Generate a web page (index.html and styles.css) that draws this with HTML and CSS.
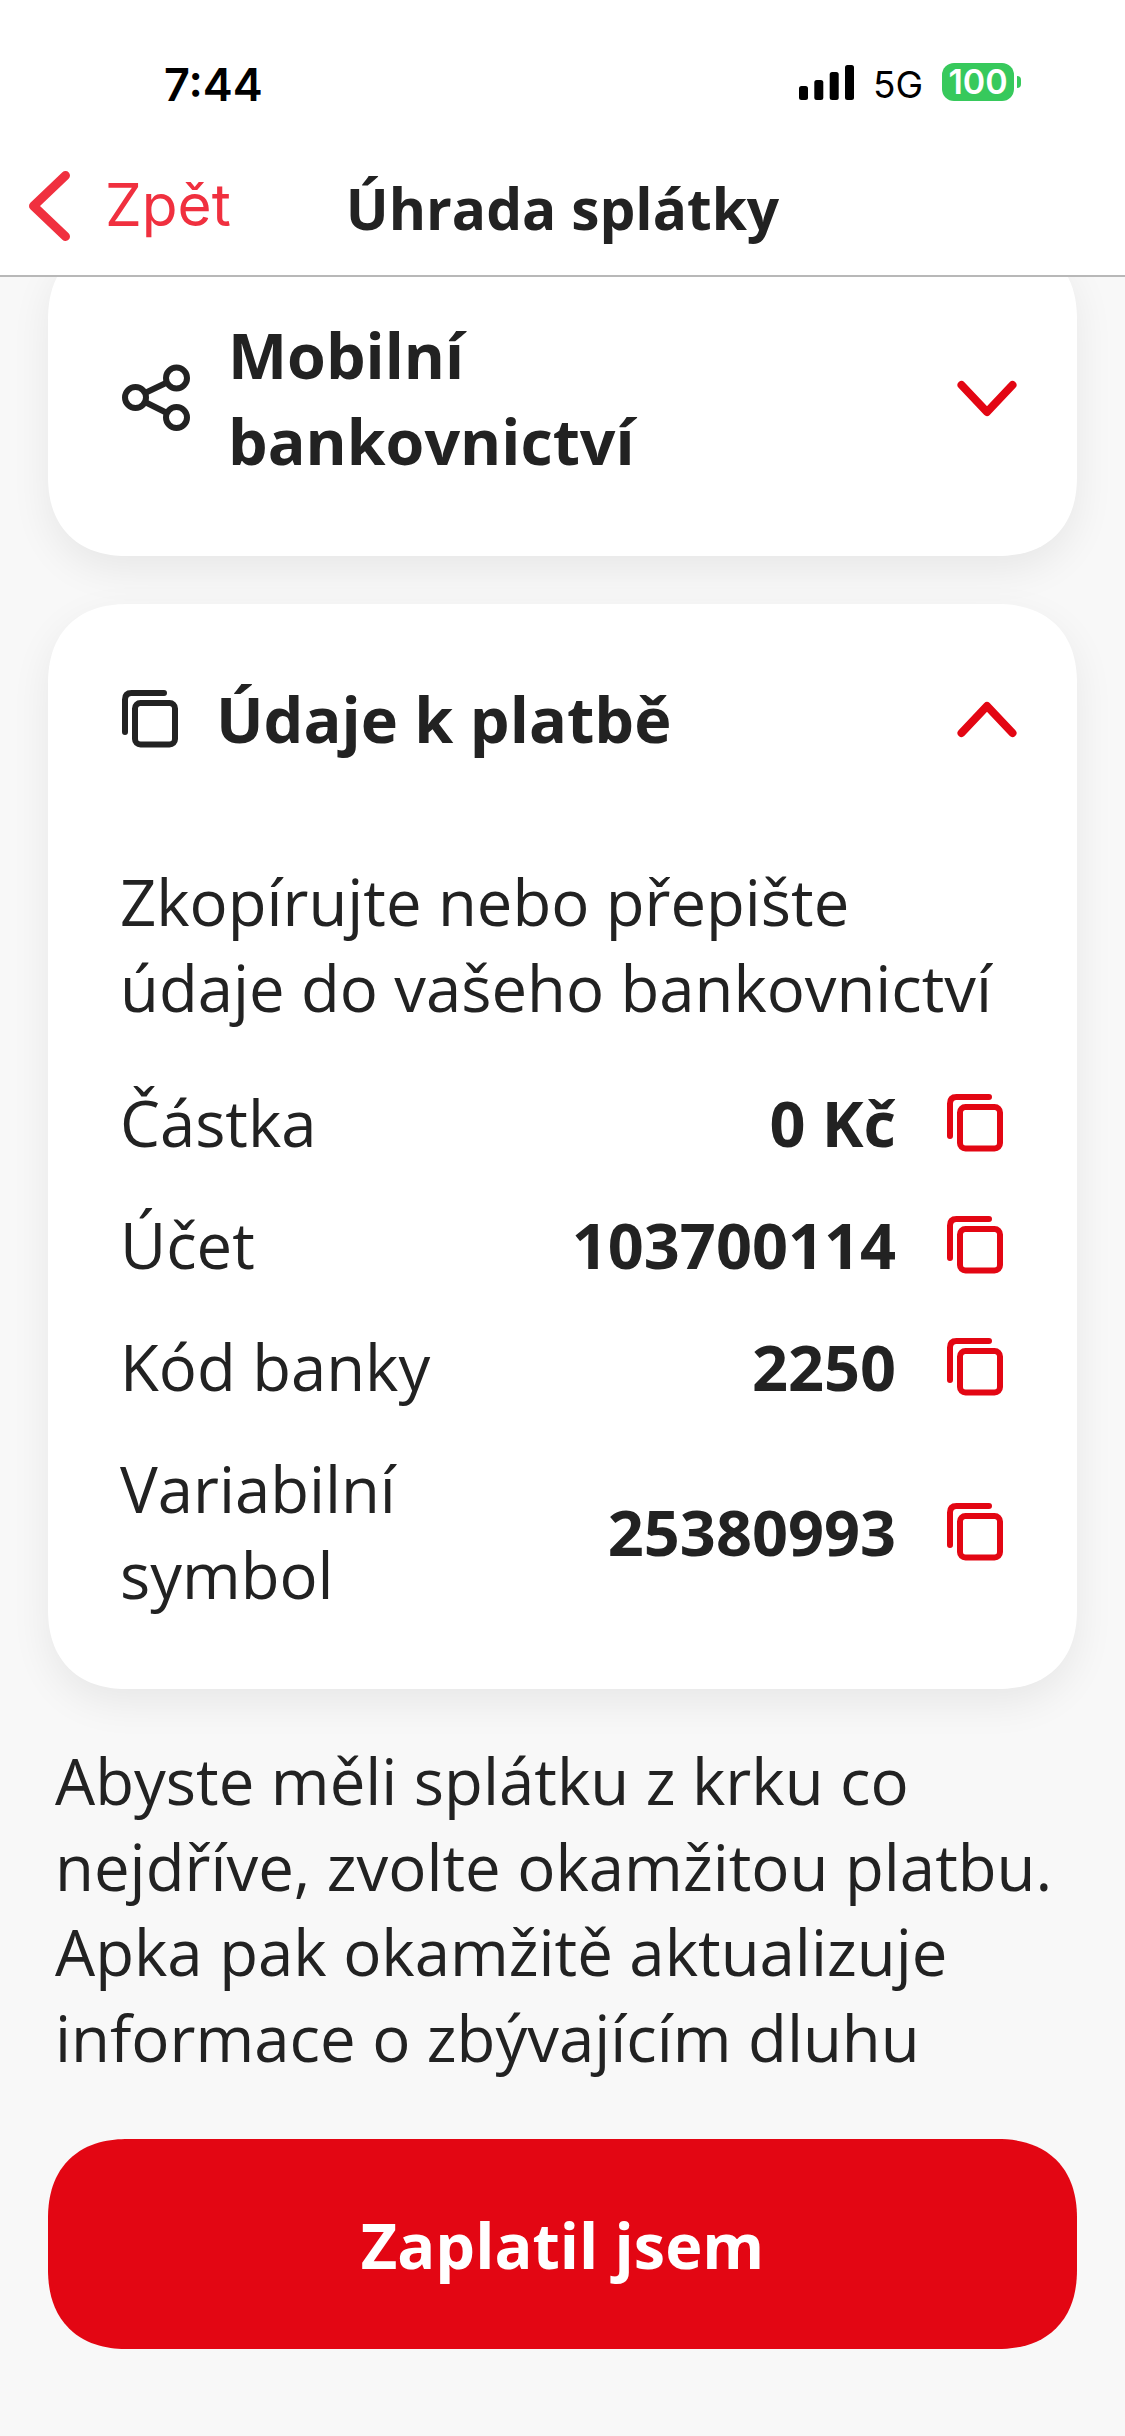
FILE: index.html
```html
<!DOCTYPE html>
<html lang="cs">
<head>
<meta charset="utf-8">
<title>Úhrada splátky</title>
<link rel="stylesheet" href="styles.css">
</head>
<body>
<div class="app">
  <div class="status">
    <span class="time">7:44</span>
    <div class="status-right">
      <svg class="signal" width="55" height="35" viewBox="0 0 55 35"><rect x="0" y="21" width="9" height="14" rx="2.5"/><rect x="15.3" y="15" width="9" height="20" rx="2.5"/><rect x="30.7" y="7" width="9" height="28" rx="2.5"/><rect x="46" y="0" width="9" height="35" rx="2.5"/></svg>
      <span class="net">5G</span>
      <div class="battery"><span class="battery-body">100</span><span class="battery-nub"></span></div>
    </div>
  </div>
  <header class="nav">
    <div class="back">
      <svg class="back-icon" width="41" height="70" viewBox="0 0 41 70"><path d="M36.500 4.500 4.500 35l32 30.500"/></svg>
      <span>Zpět</span>
    </div>
    <div class="title">Úhrada splátky</div>
    <div></div>
  </header>
  <main class="content">
    <section class="card card-clipped">
      <div class="card-head">
        <svg class="share" width="68" height="68" viewBox="0 0 68 68"><circle cx="13.500" cy="33.500" r="10.500"/><circle cx="54.500" cy="14" r="10.500"/><circle cx="54.500" cy="53.500" r="10.500"/><path d="M23 29 45 18.500M23 38l22 11"/></svg>
        <h2 class="card-title card-title-small">Mobilní<br>bankovnictví</h2>
        <svg class="chev" width="60" height="37" viewBox="0 0 60 37"><path d="M4.500 5 30 32 55.500 5"/></svg>
      </div>
    </section>
    <section class="card card-details">
      <div class="card-head">
        <svg class="copy copy-dark" width="56" height="58" viewBox="0 0 56 58"><use href="#copy-shape"/></svg>
        <h2 class="card-title">Údaje k platbě</h2>
        <svg class="chev" width="60" height="37" viewBox="0 0 60 37"><path d="M4.500 32 30 5 55.500 32"/></svg>
      </div>
      <p class="lead">Zkopírujte nebo přepište údaje do vašeho bankovnictví</p>
      <div class="rows">
        <div class="row"><span class="label">Částka</span><strong class="value">0 Kč</strong><svg class="copy" width="56" height="58" viewBox="0 0 56 58"><use href="#copy-shape"/></svg></div>
        <div class="row"><span class="label">Účet</span><strong class="value">103700114</strong><svg class="copy" width="56" height="58" viewBox="0 0 56 58"><use href="#copy-shape"/></svg></div>
        <div class="row"><span class="label">Kód banky</span><strong class="value">2250</strong><svg class="copy" width="56" height="58" viewBox="0 0 56 58"><use href="#copy-shape"/></svg></div>
        <div class="row row-tall"><span class="label">Variabilní<br>symbol</span><strong class="value">25380993</strong><svg class="copy" width="56" height="58" viewBox="0 0 56 58"><use href="#copy-shape"/></svg></div>
      </div>
    </section>
    <p class="note">Abyste měli splátku z krku co nejdříve, zvolte okamžitou platbu. Apka pak okamžitě aktualizuje informace o zbývajícím dluhu</p>
    <button class="pay">Zaplatil jsem</button>
  </main>
</div>
<svg class="defs" width="0" height="0"><defs><g id="copy-shape"><rect x="13" y="13" width="40" height="41.500" rx="5.500"/><path d="M3 42V9.500Q3 3 9.500 3H42"/></g></defs></svg>
</body>
</html>
```
FILE: styles.css
```css
* { box-sizing: border-box; }
html, body { margin: 0; padding: 0; }
body { width: 1125px; height: 2436px; overflow: hidden; background: #f8f8f8; font-family: "Open Sans", sans-serif; color: #222; }
.app { display: flex; flex-direction: column; height: 2436px; }

.status { height: 121px; background: #fff; display: flex; justify-content: space-between; padding: 63px 104px 0 164px; flex: none; }
.time { font-family: Inter, "Liberation Sans", sans-serif; font-weight: 600; font-size: 45px; line-height: 44px; color: #000; }
.status-right { display: flex; align-items: flex-start; }
.signal { fill: #000; margin-top: 2px; }
.net { font-family: Inter, "Liberation Sans", sans-serif; font-size: 37px; line-height: 38px; margin: 3px 0 0 19px; color: #000; }
.battery { display: flex; align-items: center; margin-left: 19px; }
.battery-body { width: 72px; height: 38px; border-radius: 12px; background: #37c95c; color: #fff; font-family: Inter, "Liberation Sans", sans-serif; font-weight: 600; font-size: 34px; line-height: 38px; text-align: center; }
.battery-nub { width: 4px; height: 12px; margin-left: 3px; background: #37c95c; border-radius: 0 6px 6px 0; }

.nav { height: 156px; background: #fff; border-bottom: 2px solid #b8b8b8; display: grid; grid-template-columns: 1fr auto 1fr; align-items: start; flex: none; position: relative; z-index: 2; }
.back { display: flex; align-items: flex-start; padding: 50px 0 0 29px; color: #f0303f; font-family: Inter, "Liberation Sans", sans-serif; font-size: 58.500px; line-height: 66px; }
.back span { margin: 1px 0 0 35px; }
.back-icon { fill: none; stroke: #f0303f; stroke-width: 9; stroke-linecap: round; stroke-linejoin: round; }
.title { font-weight: 700; font-size: 56.800px; line-height: 76px; padding-top: 49px; }

.content { flex: 1; overflow: hidden; padding: 0 48px; display: flex; flex-direction: column; }
.card { background: #fff; border-radius: 80px; corner-shape: superellipse(1.2); box-shadow: 0 14px 40px rgba(0,0,0,.07); flex: none; }
.card-clipped { margin-top: -37px; padding: 72px 60px 72px 74px; }
.card-details { margin-top: 48px; padding: 72px 74px 53px 74px; }
.card-head { display: flex; align-items: center; }
.card-title { margin: 0; font-size: 63px; line-height: 86px; font-weight: 700; flex: 1; padding-left: 38px; }
.card-title-small { font-size: 62.700px; }
.share { fill: none; stroke: #222; stroke-width: 6; flex: none; }
.chev { fill: none; stroke: #e30613; stroke-width: 8; stroke-linecap: round; stroke-linejoin: round; flex: none; }
.card-details .chev { margin-right: -14px; }
.copy { fill: none; stroke: #e30613; stroke-width: 6; stroke-linecap: round; flex: none; }
.copy-dark { stroke: #222; }
.lead { margin: 97px 0 0 -2px; font-size: 63.400px; line-height: 85.500px; font-weight: 400; }
.rows { display: flex; flex-direction: column; margin-top: 32px; }
.row { display: flex; align-items: center; min-height: 122px; }
.row-tall { min-height: 208px; }
.label { font-size: 63.400px; line-height: 86px; flex: 1; margin-left: -2px; }
.value { font-size: 63px; line-height: 86px; font-weight: 700; }
.row .copy { margin-left: 51px; }
.note { margin: 49px 7px 0; font-size: 63.500px; line-height: 85.500px; }
.pay { margin-top: 59px; height: 210px; border: 0; border-radius: 80px; corner-shape: superellipse(1.2); background: #e30613; color: #fff; font-family: inherit; font-size: 63px; font-weight: 700; flex: none; padding: 0; }
.defs { position: absolute; }
```
